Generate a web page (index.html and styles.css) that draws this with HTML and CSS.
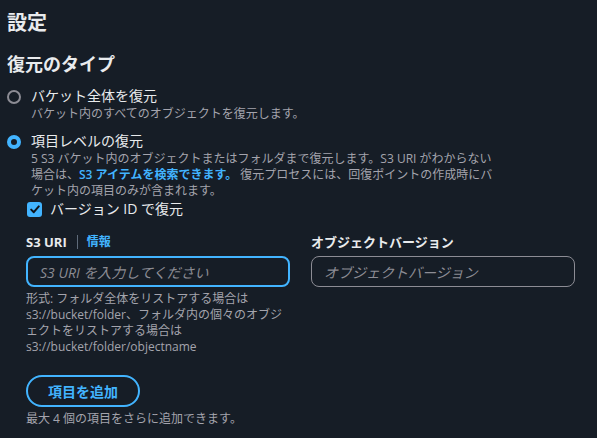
FILE: index.html
```html
<!DOCTYPE html>
<html lang="ja">
<head>
<meta charset="utf-8">
<link rel="stylesheet" href="styles.css">
</head>
<body>
<div class="page">
  <h1 class="title">設定</h1>
  <h2 class="subtitle">復元のタイプ</h2>
  <div class="radio-group">
    <div class="radio-item">
      <span class="radio"></span>
      <div class="radio-body">
        <div class="radio-label">バケット全体を復元</div>
        <div class="radio-desc">バケット内のすべてのオブジェクトを復元します。</div>
      </div>
    </div>
    <div class="radio-item second">
      <span class="radio checked"></span>
      <div class="radio-body">
        <div class="radio-label">項目レベルの復元</div>
        <div class="radio-desc wide">5 S3 バケット内のオブジェクトまたはフォルダまで復元します。S3 URI がわからない場合は、<span class="link">S3 アイテムを検索できます。</span> 復元プロセスには、回復ポイントの作成時にバケット内の項目のみが含まれます。</div>
      </div>
    </div>
  </div>
  <div class="check-row">
    <span class="checkbox">
      <svg width="10" height="9" viewBox="0 0 10 9"><path d="M1.2 4.6 L3.8 7.2 L8.8 1.4" fill="none" stroke="#0f141a" stroke-width="2" stroke-linecap="round" stroke-linejoin="round"/></svg>
    </span>
    <span class="check-label">バージョン ID で復元</span>
  </div>
  <div class="fields">
    <div class="field">
      <div class="field-label"><span>S3 URI</span><span class="sep"></span><span class="info">情報</span></div>
      <div class="input focused">S3 URI を入力してください</div>
      <div class="hint">形式: フォルダ全体をリストアする場合は s3://bucket/folder、フォルダ内の個々のオブジェクトをリストアする場合は s3://bucket/folder/objectname</div>
    </div>
    <div class="field">
      <div class="field-label"><span>オブジェクトバージョン</span></div>
      <div class="input">オブジェクトバージョン</div>
    </div>
  </div>
  <div class="add-block">
    <button class="add-btn">項目を追加</button>
    <div class="footer-note">最大 4 個の項目をさらに追加できます。</div>
  </div>
</div>
</body>
</html>
```

FILE: styles.css
```css
html, body {
  margin: 0;
  padding: 0;
  background: #161d26;
}
body {
  font-family: "Open Sans", "Noto Sans CJK JP", sans-serif;
  color: #e9ebed;
  width: 597px;
  height: 438px;
  overflow: hidden;
}
.page {
  padding: 11px 22px 0 7px;
}
.title {
  margin: 0;
  font-size: 20px;
  line-height: 24px;
  font-weight: 700;
  color: #e9ebed;
}
.subtitle {
  margin: 18px 0 0;
  font-size: 18px;
  line-height: 22px;
  font-weight: 700;
  color: #e9ebed;
}
.radio-group {
  margin-top: 12px;
  display: flex;
  flex-direction: column;
  gap: 10px;
}
.radio-item {
  display: flex;
  gap: 10px;
  align-items: flex-start;
}
.radio {
  flex: none;
  width: 14px;
  height: 14px;
  box-sizing: border-box;
  border: 2px solid #8c8c94;
  border-radius: 50%;
  margin-top: 3px;
}
.radio.checked {
  border: 4px solid #42b4ff;
  background: #161d26;
}
.radio-label {
  font-size: 14px;
  line-height: 18px;
  color: #e9ebed;
}
.radio-desc {
  font-size: 12px;
  line-height: 16px;
  color: #a4a4ad;
  margin-top: 1px;
}
.radio-desc.wide {
  width: 468px;
}
.link {
  color: #42b4ff;
  font-weight: 600;
}
.check-row {
  display: flex;
  align-items: center;
  gap: 8px;
  margin: 0 0 0 20px;
}
.checkbox {
  width: 15px;
  height: 15px;
  background: #42b4ff;
  border-radius: 3px;
  display: flex;
  align-items: center;
  justify-content: center;
}
.check-label {
  font-size: 14px;
  line-height: 20px;
  color: #e9ebed;
}
.fields {
  display: grid;
  grid-template-columns: 264px 264px;
  column-gap: 21px;
  margin: 14px 0 0 19px;
}
.field-label {
  display: flex;
  align-items: center;
  font-size: 13px;
  line-height: 18px;
  font-weight: 700;
  color: #e9ebed;
}
.sep {
  width: 1px;
  height: 14px;
  background: #5f6b7a;
  margin: 0 9px 0 10px;
}
.info {
  color: #42b4ff;
  font-weight: 600;
  font-size: 12px;
}
.input {
  margin-top: 5px;
  height: 31px;
  box-sizing: border-box;
  border: 1px solid #8c8c94;
  border-radius: 8px;
  padding: 0 12px;
  display: flex;
  align-items: center;
  font-size: 14px;
  font-style: italic;
  color: #8c8c94;
}
.input.focused {
  border: 2px solid #42b4ff;
  padding-left: 12px;
}
.hint {
  margin-top: 4px;
  font-size: 12px;
  line-height: 16px;
  color: #a4a4ad;
}
.add-block {
  margin: 20px 0 0 19px;
}
.add-btn {
  display: block;
  height: 32px;
  width: 114px;
  box-sizing: border-box;
  border: 2px solid #42b4ff;
  border-radius: 20px;
  background: transparent;
  color: #42b4ff;
  font-family: "Open Sans", "Noto Sans CJK JP", sans-serif;
  font-size: 14px;
  font-weight: 700;
  padding: 0;
}
.footer-note {
  margin-top: 4px;
  font-size: 12px;
  line-height: 16px;
  color: #a4a4ad;
}
```
